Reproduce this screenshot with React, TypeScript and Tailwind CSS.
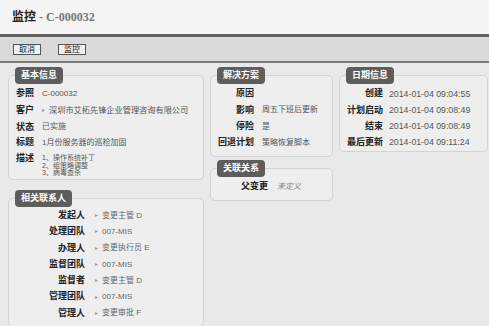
import type { ReactNode } from 'react';

const FONT = '"Liberation Sans", "Noto Sans CJK SC", sans-serif';

function Panel({ title, children, className = '' }: { title: string; children: ReactNode; className?: string }) {
  return (
    <div className={className}>
      <div className="relative z-10 ml-[7px] block h-[17px] w-fit rounded-[4px] bg-[#5d5d5d] px-[6px] text-[9px] leading-[17px] font-bold text-white">
        {title}
      </div>
      <div className="-mt-[9px] rounded-[5px] border border-[#d3d3d3] bg-[#eeeeee]">{children}</div>
    </div>
  );
}

function Bullet() {
  return <span className="mr-[4px] inline-block text-[6px] text-[#999]">▸</span>;
}

const people = [
  ['发起人', '变更主管 D'],
  ['处理团队', '007-MIS'],
  ['办理人', '变更执行员 E'],
  ['监督团队', '007-MIS'],
  ['监督者', '变更主管 D'],
  ['管理团队', '007-MIS'],
  ['管理人', '变更审批 F'],
];

const solution = [
  ['原因', ''],
  ['影响', '周五下班后更新'],
  ['停险', '是'],
  ['回退计划', '策略恢复脚本'],
];

const dates = [
  ['创建', '2014-01-04 09:04:55'],
  ['计划启动', '2014-01-04 09:08:49'],
  ['结束', '2014-01-04 09:08:49'],
  ['最后更新', '2014-01-04 09:11:24'],
];

export default function App() {
  return (
    <div className="h-[326px] w-[489px] overflow-hidden bg-[#e9e9e9]" style={{ fontFamily: FONT }}>
      <div className="flex h-[34px] items-center bg-[#f4f4f4] pl-[12px]">
        <h1 className="text-[12px] font-bold" style={{ fontFamily: '"Liberation Serif", "Noto Sans CJK SC", serif' }}>
          <span className="text-[#222]">监控</span>
          <span className="text-[#777]"> - C-000032</span>
        </h1>
      </div>

      <div className="flex h-[29px] items-center gap-[17px] border-t-[3px] border-b-[2px] border-t-[#626262] border-b-[#7a7a7a] bg-[#d9d9d9] pl-[13px]">
        <button className="h-[11px] border border-[#555] bg-[#f0f0f0] px-[5px] text-[8px] leading-[9px] text-[#222]">取消</button>
        <button className="h-[11px] border border-[#555] bg-[#f0f0f0] px-[5px] text-[8px] leading-[9px] text-[#222]">监控</button>
      </div>

      <div className="flex gap-[6px] pt-[4px] pl-[8px]">
        <div className="flex w-[196px] flex-col gap-[10px]">
          <Panel title="基本信息">
            <div className="px-[7px] pt-[10px] pb-[2px] text-[8px] text-[#555]">
              <div className="flex h-[16.3px] items-center">
                <span className="w-[26px] text-[9px] font-bold text-[#222]">参照</span>
                <span>C-000032</span>
              </div>
              <div className="flex h-[17px] items-center">
                <span className="w-[26px] text-[9px] font-bold text-[#222]">客户</span>
                <Bullet />
                <span className="text-[8.2px]">深圳市艾拓先锋企业管理咨询有限公司</span>
              </div>
              <div className="flex h-[16px] items-center">
                <span className="w-[26px] text-[9px] font-bold text-[#222]">状态</span>
                <span>已实施</span>
              </div>
              <div className="flex h-[15px] items-center">
                <span className="w-[26px] text-[9px] font-bold text-[#222]">标题</span>
                <span>1月份服务器的巡检加固</span>
              </div>
              <div className="flex pt-[4px]">
                <span className="w-[26px] text-[9px] leading-[9px] font-bold text-[#222]">描述</span>
                <div className="text-[7px] leading-[7.4px]">
                  <div>1、操作系统补丁</div>
                  <div>2、组策略调整</div>
                  <div>3、病毒查杀</div>
                </div>
              </div>
            </div>
          </Panel>

          <Panel title="相关联系人">
            <div className="pt-[9px] pb-[4px] text-[8px] text-[#666]">
              {people.map(([label, value]) => (
                <div key={label} className="flex h-[16.3px] items-center">
                  <span className="w-[76px] text-right text-[9px] font-bold text-[#222]">{label}</span>
                  <span className="ml-[10px] flex items-center">
                    <Bullet />
                    {value}
                  </span>
                </div>
              ))}
            </div>
          </Panel>
        </div>

        <div className="flex w-[123px] flex-col gap-[3px]">
          <Panel title="解决方案">
            <div className="pt-[10px] pb-[5px] text-[8px] text-[#555]">
              {solution.map(([label, value]) => (
                <div key={label} className="flex h-[16.3px] items-center">
                  <span className="w-[43px] text-right text-[9px] font-bold text-[#222]">{label}</span>
                  <span className="ml-[8px]">{value}</span>
                </div>
              ))}
            </div>
          </Panel>
          <Panel title="关联关系">
            <div className="flex pt-[10px] pb-[5px] text-[8px]">
              <div className="flex h-[16px] items-center">
                <span className="w-[57px] text-right text-[9px] font-bold text-[#222]">父变更</span>
                <span className="ml-[9px] text-[#888] italic">未定义</span>
              </div>
            </div>
          </Panel>
        </div>

        <div className="w-[149px]">
          <Panel title="日期信息">
            <div className="pt-[10px] text-[8.75px] text-[#555]">
              {dates.map(([label, value]) => (
                <div key={label} className="flex h-[16.3px] items-center">
                  <span className="w-[43px] text-right text-[9px] font-bold text-[#222]">{label}</span>
                  <span className="ml-[6px]">{value}</span>
                </div>
              ))}
            </div>
          </Panel>
        </div>
      </div>
    </div>
  );
}
